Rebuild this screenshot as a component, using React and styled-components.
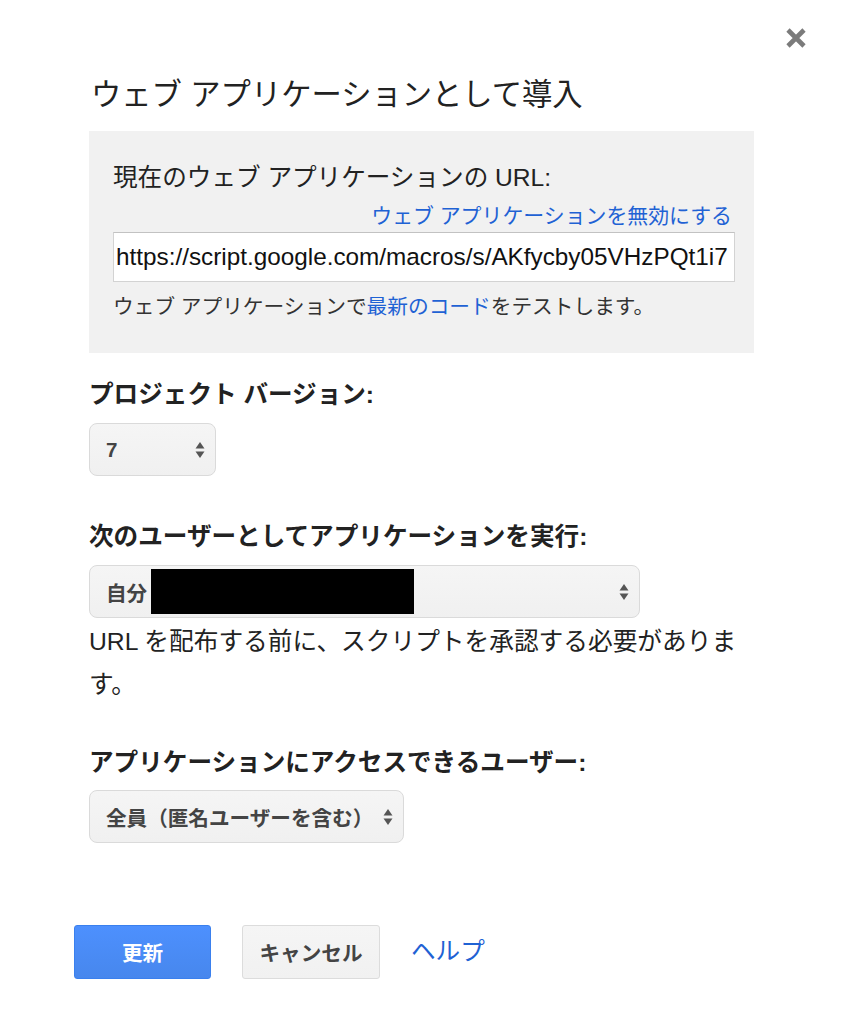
import styled, { createGlobalStyle } from "styled-components";

const GlobalStyle = createGlobalStyle`
  html, body {
    margin: 0;
    padding: 0;
    background: #fff;
  }
  body {
    font-family: "Liberation Sans", "Noto Sans CJK JP", sans-serif;
    color: #222;
  }
`;

const Dialog = styled.div`
  width: 844px;
  height: 1024px;
  box-sizing: border-box;
  padding: 0 90px 0 89px;
  display: flex;
  flex-direction: column;
  align-items: flex-start;
`;

const CloseRow = styled.div`
  align-self: stretch;
  display: flex;
  justify-content: flex-end;
  margin-right: -54px;
  padding-top: 26px;
`;

const CloseButton = styled.button`
  border: 0;
  background: transparent;
  padding: 0;
  width: 24px;
  height: 24px;
  display: flex;
  align-items: center;
  justify-content: center;
  cursor: pointer;
`;

const Title = styled.h1`
  margin: 25px 0 0 2px;
  font-size: 30.3px;
  line-height: 40px;
  font-weight: normal;
  color: #222;
`;

const InfoBox = styled.div`
  align-self: stretch;
  margin-top: 16px;
  background: #f1f1f1;
  padding: 32px 19px 33px 24px;
  display: flex;
  flex-direction: column;
`;

const InfoText = styled.div`
  font-size: 24.6px;
  line-height: 30px;
  color: #222;
`;

const DisableLink = styled.a`
  align-self: flex-end;
  margin: 10px 3px 0 0;
  font-size: 20.9px;
  line-height: 26px;
  color: #1f62d4;
  text-decoration: none;
  cursor: pointer;
`;

const UrlInput = styled.input`
  margin-top: 3px;
  height: 50px;
  box-sizing: border-box;
  width: 100%;
  border: 1px solid #d3d3d3;
  border-top-color: #c2c2c2;
  background: #fff;
  padding: 0 2px;
  font-family: "Liberation Sans", sans-serif;
  font-size: 24.3px;
  color: #111;
  outline: none;
`;

const Helper = styled.div`
  margin-top: 12px;
  font-size: 20.7px;
  line-height: 26px;
  color: #333;
`;

const InlineLink = styled.a`
  color: #1f62d4;
  text-decoration: none;
  cursor: pointer;
`;

const Label = styled.div`
  margin-top: ${(p) => p.$top}px;
  font-size: 24.6px;
  line-height: 30px;
  font-weight: bold;
  color: #222;
`;

const SelectBox = styled.div`
  margin-top: ${(p) => p.$top || 13}px;
  width: ${(p) => (p.$width ? `${p.$width}px` : "auto")};
  height: 53px;
  box-sizing: border-box;
  display: inline-flex;
  align-items: center;
  gap: 10px;
  padding: 0 10px 0 16px;
  border: 1px solid #dadada;
  border-radius: 8px;
  background: linear-gradient(#f5f5f5, #f0f0f0);
  font-size: 20.6px;
  font-weight: bold;
  color: #444;
  cursor: pointer;
`;

const SelectValue = styled.span`
  flex: 1;
  display: flex;
  align-items: center;
  white-space: nowrap;
`;

const Redacted = styled.span`
  display: inline-block;
  width: 263px;
  height: 45px;
  margin-left: 4px;
  background: #000;
`;

const Note = styled.p`
  margin: 2px 0 0;
  font-size: 24.7px;
  line-height: 43px;
  color: #222;
`;

const ButtonRow = styled.div`
  margin: 82px 0 0 -15px;
  display: flex;
  align-items: center;
  gap: 31px;
`;

const Button = styled.button`
  width: ${(p) => p.$width}px;
  height: 54px;
  border-radius: 3px;
  font-family: "Liberation Sans", "Noto Sans CJK JP", sans-serif;
  font-size: 20.6px;
  font-weight: bold;
  cursor: pointer;
  border: 1px solid ${(p) => (p.$primary ? "#3a80ee" : "#dcdcdc")};
  background: ${(p) =>
    p.$primary
      ? "linear-gradient(#4d90fe, #4787ed)"
      : "linear-gradient(#f5f5f5, #f1f1f1)"};
  color: ${(p) => (p.$primary ? "#fff" : "#444")};
`;

const HelpLink = styled.a`
  font-size: 24.6px;
  line-height: 30px;
  color: #1f62d4;
  text-decoration: none;
  cursor: pointer;
`;

const CloseIcon = () => (
  <svg width="22" height="22" viewBox="0 0 22 22">
    <path
      d="M3 3 L19 19 M19 3 L3 19"
      stroke="#7b7b7b"
      strokeWidth="4.6"
      strokeLinecap="butt"
      fill="none"
    />
  </svg>
);

const Arrows = () => (
  <svg width="10" height="18" viewBox="0 0 10 18">
    <path d="M5 1 L9.5 7.5 L0.5 7.5 Z" fill="#555" />
    <path d="M5 17 L9.5 10.5 L0.5 10.5 Z" fill="#555" />
  </svg>
);

const Select = ({ width, top, children }) => (
  <SelectBox $width={width} $top={top}>
    <SelectValue>{children}</SelectValue>
    <Arrows />
  </SelectBox>
);

export default function App() {
  return (
    <>
      <GlobalStyle />
      <Dialog>
        <CloseRow>
          <CloseButton aria-label="閉じる">
            <CloseIcon />
          </CloseButton>
        </CloseRow>
        <Title>ウェブ アプリケーションとして導入</Title>

        <InfoBox>
          <InfoText>現在のウェブ アプリケーションの URL:</InfoText>
          <DisableLink>ウェブ アプリケーションを無効にする</DisableLink>
          <UrlInput
            readOnly
            value="https://script.google.com/macros/s/AKfycby05VHzPQt1i7"
          />
          <Helper>
            ウェブ アプリケーションで<InlineLink>最新のコード</InlineLink>をテストします。
          </Helper>
        </InfoBox>

        <Label $top={27}>プロジェクト バージョン:</Label>
        <Select width={127}>7</Select>

        <Label $top={46}>次のユーザーとしてアプリケーションを実行:</Label>
        <Select width={551}>
          自分
          <Redacted />
        </Select>
        <Note>URL を配布する前に、スクリプトを承認する必要があります。</Note>

        <Label $top={42}>アプリケーションにアクセスできるユーザー:</Label>
        <Select top={12}>全員（匿名ユーザーを含む）</Select>

        <ButtonRow>
          <Button $primary $width={137}>
            更新
          </Button>
          <Button $width={138}>キャンセル</Button>
          <HelpLink>ヘルプ</HelpLink>
        </ButtonRow>
      </Dialog>
    </>
  );
}
